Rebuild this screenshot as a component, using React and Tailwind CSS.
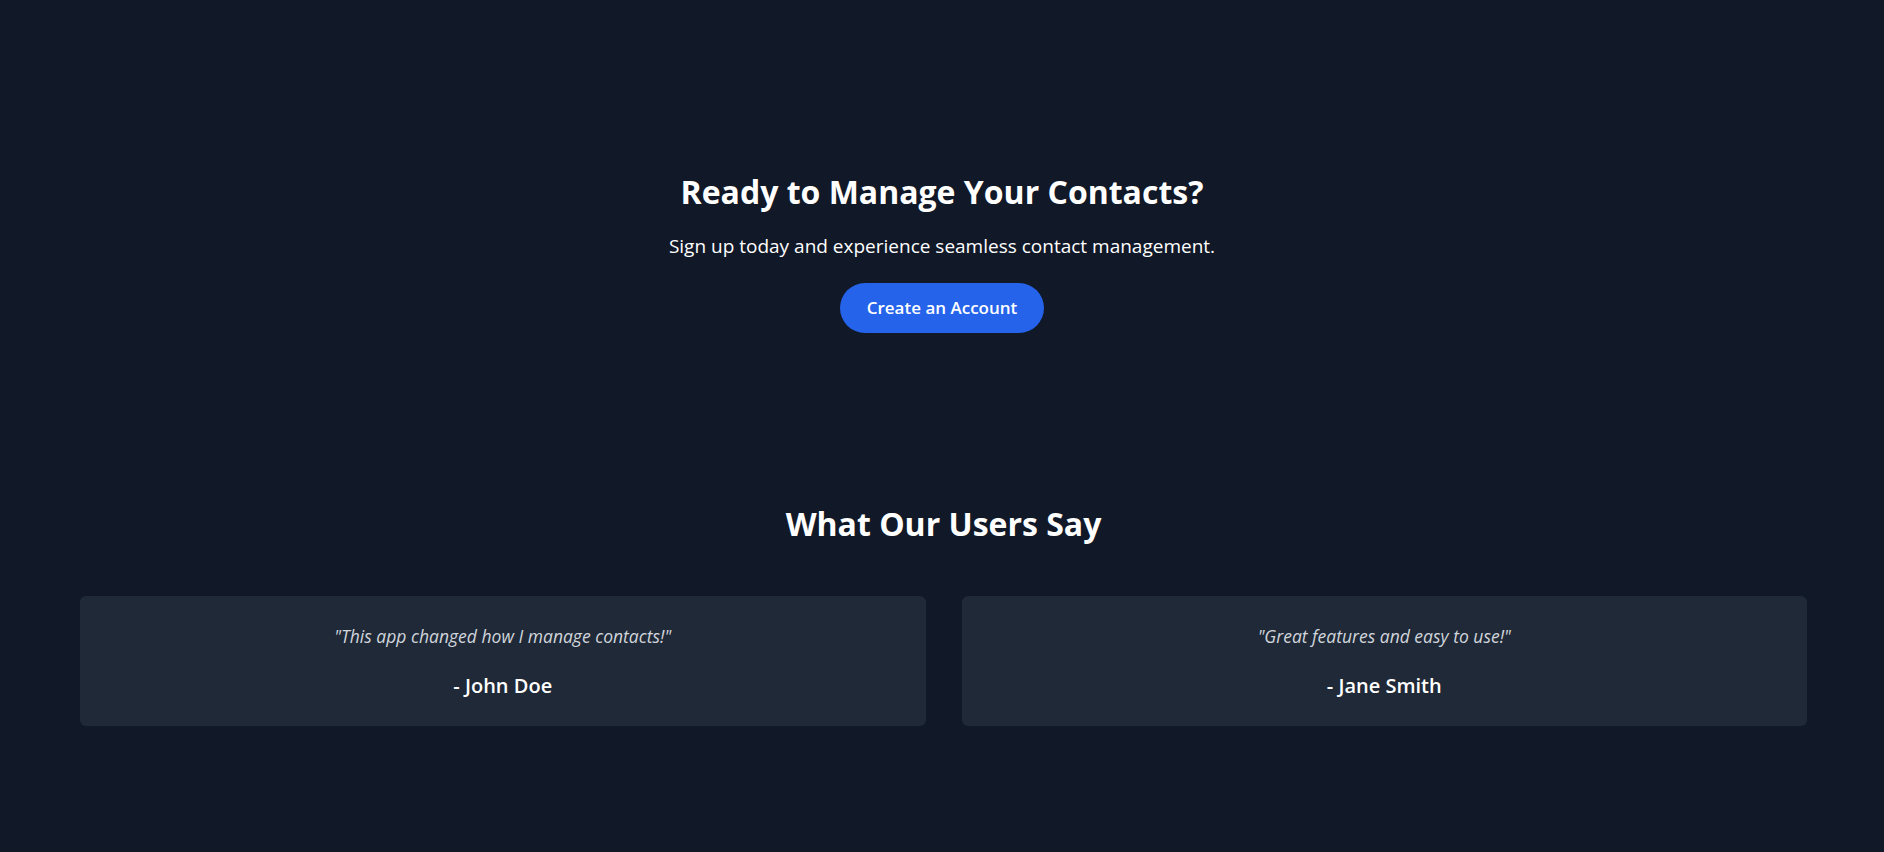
export default function App() {
  const testimonials = [
    { quote: '"This app changed how I manage contacts!"', name: "- John Doe" },
    { quote: '"Great features and easy to use!"', name: "- Jane Smith" },
  ];

  return (
    <div className="min-h-screen w-full bg-[#111827] text-white font-['Open_Sans',sans-serif]">
      {/* CTA */}
      <section className="pt-[172px] text-center">
        <h2 className="text-[32px] leading-10 font-bold">Ready to Manage Your Contacts?</h2>
        <p className="mt-5 text-[19px] leading-7">Sign up today and experience seamless contact management.</p>
        <button className="mt-[23px] bg-[#2563eb] text-white text-[17px] leading-7 font-semibold px-[27px] py-[11px] rounded-full">
          Create an Account
        </button>
      </section>

      {/* Testimonials */}
      <section className="pt-[171px] pb-[122px] pl-20 pr-[77px]">
        <h2 className="text-[32px] leading-10 font-bold text-center">What Our Users Say</h2>
        <div className="mt-[52px] grid grid-cols-2 gap-9">
          {testimonials.map((t) => (
            <div key={t.name} className="bg-[#1f2937] rounded-md pt-7 pb-[26px] px-7 text-center">
              <p className="italic text-[17.5px] leading-6 text-gray-300">{t.quote}</p>
              <p className="mt-6 text-xl leading-7 font-semibold">{t.name}</p>
            </div>
          ))}
        </div>
      </section>
    </div>
  );
}
